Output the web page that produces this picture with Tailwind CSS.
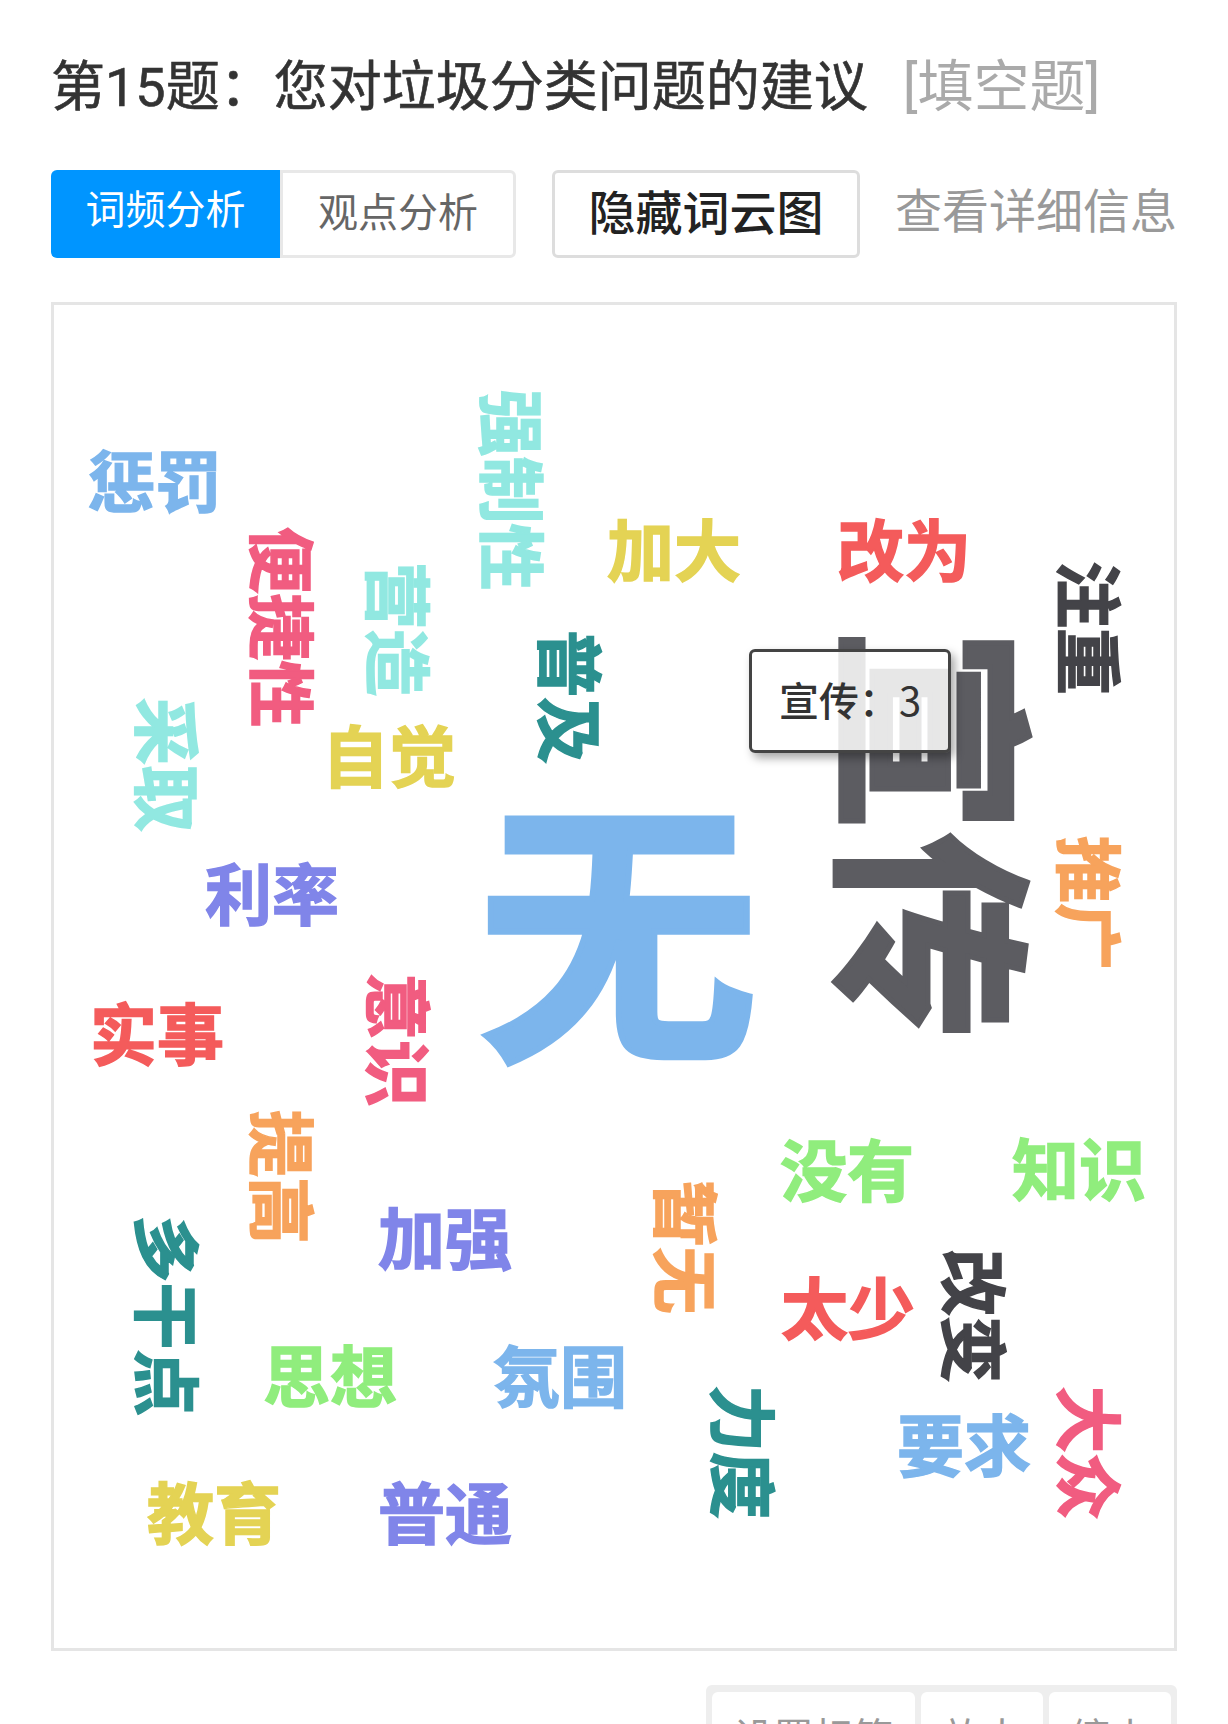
<!DOCTYPE html>
<html lang="zh-CN">
<head>
    <meta charset="UTF-8" />
    <title>第15题</title>
    <script src="https://cdn.jsdelivr.net/npm/@tailwindcss/browser@4"></script>
</head>
<body class="bg-white h-[1724px] overflow-hidden font-['Roboto','Noto_Sans_CJK_SC',sans-serif]">
    <div class="pl-[51px] pr-[51px] pt-[53px]">
        <!-- 题目 -->
        <h2 class="text-[54px] leading-[68px] text-[#333] whitespace-nowrap h-[68px] [-webkit-text-stroke:0.6px]">
            第15题：您对垃圾分类问题的建议<span class="text-[#aaa] text-[56px] ml-[35px] [-webkit-text-stroke:0px]">[填空题]</span>
        </h2>

        <!-- 按钮行 -->
        <div class="flex items-center mt-[49px] h-[88px]">
            <div class="w-[229px] h-full bg-[#0095ff] text-white text-[40px] rounded-l-[6px] flex items-center justify-center pb-[6px]">词频分析</div>
            <div class="w-[236px] h-full bg-white text-[#666] text-[40px] border-[3px] border-[#e8e8e8] rounded-r-[6px] flex items-center justify-center">观点分析</div>
            <div class="w-[308px] h-full ml-[36px] bg-white text-[#222] text-[47px] font-medium border-[3px] border-[#ddd] rounded-[6px] flex items-center justify-center">隐藏词云图</div>
            <div class="ml-[35px] pb-[3px] text-[#999] text-[47px] whitespace-nowrap">查看详细信息</div>
        </div>

        <!-- 词云 -->
        <div class="relative mt-[44px] h-[1349px] border-[3px] border-[#e5e5e5] font-['Noto_Sans_CJK_SC',sans-serif] font-bold leading-none">
            <div class="absolute left-[-54px] top-[-305px] w-0 h-0">
                <span class="absolute left-[155px] top-[477px] -translate-x-1/2 -translate-y-1/2 whitespace-nowrap text-[67px] [-webkit-text-stroke:1.5px] text-[#7cb5ec]">惩罚</span>
                <span class="absolute left-[515px] top-[490px] -translate-x-1/2 -translate-y-1/2 whitespace-nowrap text-[67px] [-webkit-text-stroke:1.5px] rotate-90 text-[#91e8e1]">强制性</span>
                <span class="absolute left-[285px] top-[627px] -translate-x-1/2 -translate-y-1/2 whitespace-nowrap text-[67px] [-webkit-text-stroke:1.5px] rotate-90 text-[#f15c80]">便捷性</span>
                <span class="absolute left-[401px] top-[629px] -translate-x-1/2 -translate-y-1/2 whitespace-nowrap text-[67px] [-webkit-text-stroke:1.5px] rotate-90 text-[#91e8e1]">营造</span>
                <span class="absolute left-[674px] top-[546px] -translate-x-1/2 -translate-y-1/2 whitespace-nowrap text-[67px] [-webkit-text-stroke:1.5px] text-[#e4d354]">加大</span>
                <span class="absolute left-[904px] top-[546px] -translate-x-1/2 -translate-y-1/2 whitespace-nowrap text-[67px] [-webkit-text-stroke:1.5px] text-[#f45b5b]">改为</span>
                <span class="absolute left-[1092px] top-[628px] -translate-x-1/2 -translate-y-1/2 whitespace-nowrap text-[67px] [-webkit-text-stroke:1.5px] rotate-90 text-[#434348]">注重</span>
                <span class="absolute left-[573px] top-[697px] -translate-x-1/2 -translate-y-1/2 whitespace-nowrap text-[67px] [-webkit-text-stroke:1.5px] rotate-90 text-[#2b908f]">普及</span>
                <span class="absolute left-[170px] top-[765px] -translate-x-1/2 -translate-y-1/2 whitespace-nowrap text-[67px] [-webkit-text-stroke:1.5px] rotate-90 text-[#91e8e1]">采取</span>
                <span class="absolute left-[389px] top-[752px] -translate-x-1/2 -translate-y-1/2 whitespace-nowrap text-[67px] [-webkit-text-stroke:1.5px] text-[#e4d354]">自觉</span>
                <span class="absolute left-[272px] top-[890px] -translate-x-1/2 -translate-y-1/2 whitespace-nowrap text-[67px] [-webkit-text-stroke:1.5px] text-[#8085e9]">利率</span>
                <span class="absolute left-[618px] top-[917px] -translate-x-1/2 -translate-y-1/2 whitespace-nowrap text-[280px] [-webkit-text-stroke:6px] text-[#7cb5ec]">无</span>
                <span class="absolute left-[943px] top-[833px] -translate-x-1/2 -translate-y-1/2 whitespace-nowrap text-[205px] [-webkit-text-stroke:5px] rotate-90 text-[#5c5c61]">宣传</span>
                <span class="absolute left-[1092px] top-[903px] -translate-x-1/2 -translate-y-1/2 whitespace-nowrap text-[67px] [-webkit-text-stroke:1.5px] rotate-90 text-[#f7a35c]">推广</span>
                <span class="absolute left-[157px] top-[1030px] -translate-x-1/2 -translate-y-1/2 whitespace-nowrap text-[67px] [-webkit-text-stroke:1.5px] text-[#f45b5b]">实事</span>
                <span class="absolute left-[401px] top-[1040px] -translate-x-1/2 -translate-y-1/2 whitespace-nowrap text-[67px] [-webkit-text-stroke:1.5px] rotate-90 text-[#f15c80]">意识</span>
                <span class="absolute left-[285px] top-[1177px] -translate-x-1/2 -translate-y-1/2 whitespace-nowrap text-[67px] [-webkit-text-stroke:1.5px] rotate-90 text-[#f7a35c]">提高</span>
                <span class="absolute left-[847px] top-[1166px] -translate-x-1/2 -translate-y-1/2 whitespace-nowrap text-[67px] [-webkit-text-stroke:1.5px] text-[#90ed7d]">没有</span>
                <span class="absolute left-[1079px] top-[1165px] -translate-x-1/2 -translate-y-1/2 whitespace-nowrap text-[67px] [-webkit-text-stroke:1.5px] text-[#90ed7d]">知识</span>
                <span class="absolute left-[445px] top-[1234px] -translate-x-1/2 -translate-y-1/2 whitespace-nowrap text-[67px] [-webkit-text-stroke:1.5px] text-[#8085e9]">加强</span>
                <span class="absolute left-[689px] top-[1247px] -translate-x-1/2 -translate-y-1/2 whitespace-nowrap text-[67px] [-webkit-text-stroke:1.5px] rotate-90 text-[#f7a35c]">暂无</span>
                <span class="absolute left-[170px] top-[1316px] -translate-x-1/2 -translate-y-1/2 whitespace-nowrap text-[67px] [-webkit-text-stroke:1.5px] rotate-90 text-[#2b908f]">多干点</span>
                <span class="absolute left-[848px] top-[1304px] -translate-x-1/2 -translate-y-1/2 whitespace-nowrap text-[67px] [-webkit-text-stroke:1.5px] text-[#f45b5b]">太少</span>
                <span class="absolute left-[977px] top-[1316px] -translate-x-1/2 -translate-y-1/2 whitespace-nowrap text-[67px] [-webkit-text-stroke:1.5px] rotate-90 text-[#434348]">改变</span>
                <span class="absolute left-[330px] top-[1372px] -translate-x-1/2 -translate-y-1/2 whitespace-nowrap text-[67px] [-webkit-text-stroke:1.5px] text-[#90ed7d]">思想</span>
                <span class="absolute left-[560px] top-[1372px] -translate-x-1/2 -translate-y-1/2 whitespace-nowrap text-[67px] [-webkit-text-stroke:1.5px] text-[#7cb5ec]">氛围</span>
                <span class="absolute left-[746px] top-[1452px] -translate-x-1/2 -translate-y-1/2 whitespace-nowrap text-[67px] [-webkit-text-stroke:1.5px] rotate-90 text-[#2b908f]">力度</span>
                <span class="absolute left-[1092px] top-[1453px] -translate-x-1/2 -translate-y-1/2 whitespace-nowrap text-[67px] [-webkit-text-stroke:1.5px] rotate-90 text-[#f15c80]">大众</span>
                <span class="absolute left-[964px] top-[1441px] -translate-x-1/2 -translate-y-1/2 whitespace-nowrap text-[67px] [-webkit-text-stroke:1.5px] text-[#7cb5ec]">要求</span>
                <span class="absolute left-[214px] top-[1509px] -translate-x-1/2 -translate-y-1/2 whitespace-nowrap text-[67px] [-webkit-text-stroke:1.5px] text-[#e4d354]">教育</span>
                <span class="absolute left-[445px] top-[1509px] -translate-x-1/2 -translate-y-1/2 whitespace-nowrap text-[67px] [-webkit-text-stroke:1.5px] text-[#8085e9]">普通</span>
            </div>
            <!-- 提示框 -->
            <div class="absolute left-[695px] top-[344px] w-[202px] h-[104px] pb-[4px] flex items-center justify-center bg-white/85 border-[3px] border-[#444] rounded-[6px] shadow-[4px_5px_10px_rgba(0,0,0,0.35)] text-[40px] font-medium text-[#333] whitespace-nowrap">
                宣传：<span class="font-normal">3</span>
            </div>
        </div>

        <!-- 工具栏 -->
        <div class="flex justify-end mt-[34px]">
            <div class="flex gap-[6px] bg-[#eee] rounded-[6px] px-[6px] pt-[7px] pb-[6px] text-[40px] font-normal text-[#999] font-['Noto_Sans_CJK_SC',sans-serif]">
                <div class="w-[203px] h-[86px] bg-white rounded-[6px] flex items-center justify-center">设置标签</div>
                <div class="w-[122px] h-[86px] bg-white rounded-[6px] flex items-center justify-center">放大</div>
                <div class="w-[122px] h-[86px] bg-white rounded-[6px] flex items-center justify-center">缩小</div>
            </div>
        </div>
    </div>
</body>
</html>
